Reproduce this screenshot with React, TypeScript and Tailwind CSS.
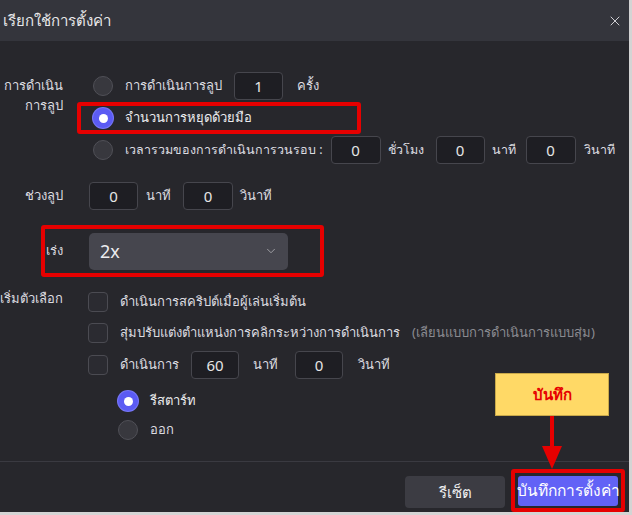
import { X, ChevronDown } from "lucide-react";

function Radio({ checked }: { checked?: boolean }) {
  if (checked) {
    return (
      <div className="w-5 h-5 rounded-full bg-[#5b5bf3] flex items-center justify-center shrink-0 shadow-[0_0_0_1px_#7676f7]">
        <div className="w-[9px] h-[9px] rounded-full bg-white"></div>
      </div>
    );
  }
  return (
    <div className="w-5 h-5 rounded-full bg-[#38383e] border border-[#505057] shrink-0"></div>
  );
}

function Checkbox() {
  return (
    <div className="w-5 h-5 rounded-[4px] bg-[#2b2b31] border-[1.5px] border-[#4b4b52] shrink-0"></div>
  );
}

function NumBox({ value, w = "w-[50px]" }: { value: string; w?: string }) {
  return (
    <div
      className={`${w} h-[28px] rounded-[4px] bg-[#1e1e23] border border-[#46464d] flex items-center justify-center text-[15px] text-[#e6e6e6] shrink-0`}
    >
      {value}
    </div>
  );
}

export default function App() {
  return (
    <div className="w-[632px] h-[515px] bg-[#d4d4d4] pr-[3px] pb-[3px] font-['Noto_Sans',sans-serif] text-[13px] text-[#dcdce0] relative">
      <div className="h-full bg-[#27272c] flex flex-col">
        {/* header */}
        <div className="h-[41px] bg-[#34353c] flex items-center justify-between pl-[3px] pr-[6px]">
          <span className="text-[15px] text-[#e8e8ea]">เรียกใช้การตั้งค่า</span>
          <X size={16} strokeWidth={1.5} className="text-[#cfcfd3]" />
        </div>

        {/* body */}
        <div className="flex-1 pt-[29px]">
          {/* loop mode */}
          <div className="flex">
            <div className="w-[63px] text-right leading-[20px] pt-[5px] shrink-0">
              <div>การดำเนิน</div>
              <div>การลูป</div>
            </div>
            <div className="ml-[25px] flex flex-col">
              <div className="h-8 flex items-center pl-[5px]">
                <Radio />
                <span className="ml-3">การดำเนินการลูป</span>
                <div className="ml-[12px]">
                  <NumBox value="1" w="w-[49px]" />
                </div>
                <span className="ml-[14px]">ครั้ง</span>
              </div>
              <div className="h-8 flex items-center pl-[5px] relative">
                <div className="absolute top-0 bottom-0 left-[-11px] w-[284px] border-4 border-[#e60000] rounded-[3px]"></div>
                <Radio checked />
                <span className="ml-3 text-[#ececef]">จำนวนการหยุดด้วยมือ</span>
              </div>
              <div className="h-8 flex items-center pl-[5px] text-[12.5px]">
                <Radio />
                <span className="ml-3">เวลารวมของการดำเนินการวนรอบ :</span>
                <div className="ml-[8px]">
                  <NumBox value="0" />
                </div>
                <span className="ml-[7px]">ชั่วโมง</span>
                <div className="ml-[12px]">
                  <NumBox value="0" w="w-[49px]" />
                </div>
                <span className="ml-[7px]">นาที</span>
                <div className="ml-[10px]">
                  <NumBox value="0" />
                </div>
                <span className="ml-[8px]">วินาที</span>
              </div>
            </div>
          </div>

          {/* loop interval */}
          <div className="flex mt-[14px] h-8 items-center">
            <div className="w-[63px] text-right shrink-0">ช่วงลูป</div>
            <div className="ml-[26px] flex items-center">
              <NumBox value="0" w="w-[49px]" />
              <span className="ml-2">นาที</span>
              <div className="ml-3">
                <NumBox value="0" />
              </div>
              <span className="ml-[7px]">วินาที</span>
            </div>
          </div>

          {/* speed */}
          <div className="mt-[13px] ml-[41px] w-[283px] h-[52px] border-4 border-[#e60000] rounded-[3px] flex items-center">
            <div className="w-[18px] text-right shrink-0">เร่ง</div>
            <div className="ml-[26px] w-[199px] h-[37px] rounded-[5px] bg-[#46464e] flex items-center justify-between pl-[11px] pr-[10px]">
              <span className="text-[18px] text-[#ececef]">2x</span>
              <ChevronDown size={14} strokeWidth={1.5} className="text-[#a9a9ae]" />
            </div>
          </div>

          {/* start options */}
          <div className="flex mt-[9px]">
            <div className="w-[63px] text-right leading-[20px] pt-[2px] shrink-0">เริ่มตัวเลือก</div>
            <div className="ml-[25px] flex flex-col">
              <div className="h-8 flex items-center">
                <Checkbox />
                <span className="ml-3">ดำเนินการสคริปต์เมื่อผู้เล่นเริ่มต้น</span>
              </div>
              <div className="h-[30px] flex items-center">
                <Checkbox />
                <span className="ml-3">สุ่มปรับแต่งตำแหน่งการคลิกระหว่างการดำเนินการ</span>
                <span className="ml-3 text-[#8b8b91]">(เลียนแบบการดำเนินการแบบสุ่ม)</span>
              </div>
              <div className="h-[34px] flex items-center">
                <Checkbox />
                <span className="ml-3">ดำเนินการ</span>
                <div className="ml-3">
                  <NumBox value="60" w="w-[48px]" />
                </div>
                <span className="ml-[14px]">นาที</span>
                <div className="ml-[17px]">
                  <NumBox value="0" w="w-[48px]" />
                </div>
                <span className="ml-[15px]">วินาที</span>
              </div>
              <div className="h-[30px] mt-1 flex items-center pl-[30px]">
                <Radio checked />
                <span className="ml-3 text-[#ececef]">รีสตาร์ท</span>
              </div>
              <div className="h-[28px] flex items-center pl-[30px]">
                <Radio />
                <span className="ml-3">ออก</span>
              </div>
            </div>
          </div>
        </div>

        {/* footer */}
        <div className="h-[51px] border-t border-[#3a3a41] flex items-end justify-end pr-[4px]">
          <button className="w-[100px] h-[32px] mb-[4px] rounded-[4px] bg-[#3c3c43] text-[15px] text-[#f0f0f2]">
            รีเซ็ต
          </button>
          <div className="ml-[6px] w-[114px] h-[43px] border-4 border-[#e60000] rounded-[3px] flex items-center justify-center">
            <button className="w-[100px] h-[30px] rounded-[3px] bg-[#6262f6] text-[15.5px] text-white whitespace-nowrap flex items-center justify-center">
              บันทึกการตั้งค่า
            </button>
          </div>
        </div>
      </div>

      {/* annotation */}
      <div className="absolute left-[495px] top-[373px] w-[114px] h-[43px] bg-[#ffd966] border border-[#c8a84a] flex items-center justify-center">
        <span className="text-[15px] font-bold text-[#e60000]">บันทึก</span>
      </div>
      <svg className="absolute left-[540px] top-[416px]" width="24" height="54" viewBox="0 0 24 54">
        <rect x="10" y="0" width="4" height="32" fill="#e60000" />
        <polygon points="2,30 22,30 12,53" fill="#e60000" />
      </svg>
    </div>
  );
}
